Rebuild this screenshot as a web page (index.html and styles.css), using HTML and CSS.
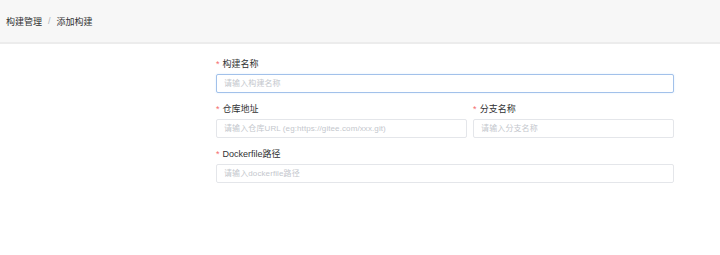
FILE: index.html
```html
<!DOCTYPE html>
<html lang="zh-CN">
<head>
  <meta charset="UTF-8" />
  <meta name="viewport" content="width=device-width, initial-scale=1.0"/>
  <title>添加构建</title>
  <link rel="stylesheet" href="styles.css">
</head>
<body>
  <header class="topbar">
    <span class="crumb">构建管理</span>
    <span class="crumb-sep">/</span>
    <span class="crumb current">添加构建</span>
  </header>

  <form class="build-form">
    <div class="field">
      <label><span class="req">*</span>构建名称</label>
      <input type="text" class="input is-focus" placeholder="请输入构建名称" />
    </div>

    <div class="row">
      <div class="field">
        <label><span class="req">*</span>仓库地址</label>
        <input type="text" class="input" placeholder="请输入仓库URL (eg:https://gitee.com/xxx.git)" />
      </div>
      <div class="field">
        <label><span class="req">*</span>分支名称</label>
        <input type="text" class="input" placeholder="请输入分支名称" />
      </div>
    </div>

    <div class="field">
      <label><span class="req">*</span>Dockerfile路径</label>
      <input type="text" class="input" placeholder="请输入dockerfile路径" />
    </div>
  </form>
</body>
</html>
```

FILE: styles.css
```css
body {
  margin: 0;
  font-family: "Liberation Sans", "Noto Sans CJK SC", sans-serif;
  background: #ffffff;
  color: #333333;
}
.topbar {
  height: 42px;
  background: #f7f7f7;
  border-bottom: 2px solid #ececec;
  display: flex;
  align-items: center;
  padding-left: 6px;
  font-size: 9px;
}
.crumb {
  color: #303133;
}
.crumb-sep {
  color: #b0b3b8;
  margin: 0 6px;
}
.build-form {
  width: 458px;
  margin-left: 216px;
  padding-top: 14px;
  display: flex;
  flex-direction: column;
  gap: 10px;
}
.row {
  display: grid;
  grid-template-columns: 5fr 4fr;
  gap: 6px;
}
.field {
  display: flex;
  flex-direction: column;
  gap: 4px;
}
.field label {
  font-size: 9px;
  line-height: 12px;
  color: #303133;
}
.req {
  color: #f56c6c;
  margin-right: 3px;
}
.input {
  box-sizing: border-box;
  height: 19px;
  width: 100%;
  margin: 0;
  padding: 0 7px;
  border: 1px solid #e4e6ea;
  border-radius: 2px;
  font-family: inherit;
  font-size: 8px;
  letter-spacing: 0.1px;
  color: #606266;
  outline: none;
}
.input::placeholder {
  color: #c4c7cd;
}
.input.is-focus {
  border-color: #a2c1ea;
  box-shadow: 0 0 2px rgba(64, 158, 255, 0.2);
}
```
